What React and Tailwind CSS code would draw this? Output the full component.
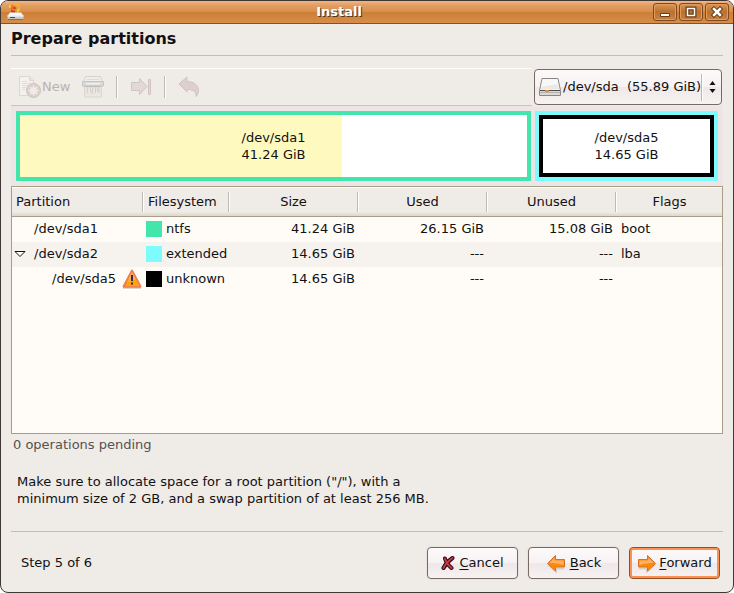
import { useState } from "react";

const partitions = [
  { name: "/dev/sda1", depth: 0, fs: "ntfs", color: "bg-[#42e5ac]", size: "41.24 GiB", used: "26.15 GiB", unused: "15.08 GiB", flags: "boot" },
  { name: "/dev/sda2", depth: 0, fs: "extended", color: "bg-[#7dfcfe]", size: "14.65 GiB", used: "---", unused: "---", flags: "lba", children: true },
  { name: "/dev/sda5", depth: 1, fs: "unknown", color: "bg-black", size: "14.65 GiB", used: "---", unused: "---", flags: "", warning: true },
];

const columns = ["Partition", "Filesystem", "Size", "Used", "Unused", "Flags"];

/* ---------- icons ---------- */

function InstallerIcon() {
  return (
    <svg width="18" height="18" viewBox="0 0 18 18" aria-hidden="true">
      <path d="M5 6.500a3.500 3.500 0 0 1 1-4" fill="none" stroke="#f0661c" strokeWidth="2" />
      <path d="M7 1.500a3.500 3.500 0 0 1 5 3" fill="none" stroke="#f9b51b" strokeWidth="2" />
      <path d="M12 5.500a3.500 3.500 0 0 1-2 3" fill="none" stroke="#f7d51c" strokeWidth="2" />
      <path d="M4 8l4 1" stroke="#d9301c" strokeWidth="2" />
      <circle cx="3" cy="3.500" r="1.200" fill="#f9d22b" />
      <circle cx="7.500" cy="5" r="1.500" fill="#e2401d" />
      <path d="M3 9.500h11l2.500 3.500H0.500z" fill="#f8f8f8" />
      <path d="M0.500 12.500h16V16h-16z" fill="#c8c8c8" />
      <path d="M0.500 12.500h16v1h-16z" fill="#ffffff" />
      <path d="M3 14h5v1H3z" fill="#44502f" />
      <path d="M1 16h15v1H1z" fill="#74706b" />
    </svg>
  );
}

function NewIcon() {
  return (
    <svg width="24" height="24" viewBox="0 0 24 24" aria-hidden="true">
      <path d="M1.500 1.500h10l4 4v15h-14z" fill="#f3f0ed" stroke="#ddd6d2" />
      <path d="M11.500 1.500v4h4" fill="#e6e1dd" stroke="#ddd6d2" />
      <path d="M4 6.500h5M4 8.500h8M4 10.500h7M4 12.500h4M4 14.500h3" stroke="#e2ddd9" />
      <circle cx="15.500" cy="15.500" r="7" fill="#dccfca" stroke="#d0c3be" />
      <path d="M15.500 9.500l1.300 3.200 3-1.500-1.400 3 3.100 1.300-3.100 1.300 1.400 3-3-1.400-1.300 3.100-1.300-3.100-3 1.400 1.400-3-3.100-1.300 3.100-1.300-1.400-3 3 1.500z" fill="#f1ebe7" />
    </svg>
  );
}

function DeleteIcon() {
  return (
    <svg width="22" height="22" viewBox="0 0 22 22" aria-hidden="true">
      <path d="M2.500 9.500h17v11.500h-17z" fill="#ebe6e2" stroke="#dcd6d2" />
      <path d="M6 10l-1 7M8.500 10v6M11 10l-1 8M13.500 10v7M15 10l1 6M17 10v7" stroke="#d3ceca" />
      <path d="M3.500 0.500h15l2 5h-19z" fill="#efecea" stroke="#d6d2cf" />
      <path d="M4.500 3.500h13" stroke="#dedad7" />
      <path d="M0.500 5.500h21v4.500h-21z" fill="#d9d8d7" stroke="#c8c6c5" />
      <path d="M4 7h14v1.500H4z" fill="#f2f0ef" />
      <path d="M3 10.500h16" stroke="#bfbcba" />
    </svg>
  );
}

function ResizeIcon() {
  return (
    <svg width="22" height="20" viewBox="0 0 22 20" aria-hidden="true">
      <path d="M1.500 5.500h8v-4l7.500 8-7.500 8v-4h-8z" fill="#e3d9d4" stroke="#d0c5c0" />
      <path d="M18.500 2.500h2v15h-2z" fill="#e0d6d1" stroke="#d0c5c0" />
    </svg>
  );
}

function UndoIcon() {
  return (
    <svg width="22" height="22" viewBox="0 0 22 22" aria-hidden="true">
      <path d="M1 8l8-7v4.500c7 0 11.500 4 11.500 9 0 2.500-1 4.500-2.500 6 .5-5-2.500-7-9-7v2.500z" fill="#ddd0cb" stroke="#d0c3be" />
    </svg>
  );
}

function DriveIcon() {
  return (
    <svg width="24" height="20" viewBox="0 0 24 20" aria-hidden="true">
      <path d="M4 1.500h16l2.500 12v4.500h-21v-4.500z" fill="#fafafa" stroke="#8a8683" strokeLinejoin="round" />
      <path d="M5 2.500h14l2 10H3z" fill="#e9e9e8" />
      <path d="M5 2.500h14l1 5C14 7 9 9 3.500 10z" fill="#f8f8f7" />
      <path d="M2 13.500h20" stroke="#4d4a47" />
      <path d="M2 14h20v4H2z" fill="#dad9d7" />
      <path d="M2 15.500h20" stroke="#b4b2af" />
      <path d="M7 13h4v2H7z" fill="#f08a24" />
      <path d="M1.500 18.500h21" stroke="#8a8783" />
    </svg>
  );
}

function WarningIcon() {
  return (
    <svg width="20" height="20" viewBox="0 0 20 20" className="mr-0.5 shrink-0" role="img" aria-label="warning">
      <path d="M1 18.500h18" stroke="#b9b2a8" strokeWidth="2" />
      <path d="M10 1.500l8.500 16h-17z" fill="#fb8a08" stroke="#ee8150" strokeWidth="2" strokeLinejoin="round" />
      <path d="M10 3l4 7.500c-3 1-6 2-9 3z" fill="#fcae62" />
      <path d="M5 13.500l9-3 3.500 6.500h-14z" fill="#ffa30d" />
      <path d="M9 6h2v6H9zM9 13.500h2v2H9z" fill="#2f3136" />
    </svg>
  );
}

function CancelIcon() {
  return (
    <svg width="14" height="16" viewBox="0 0 14 16" aria-hidden="true">
      <path d="M4 3.500c1 4 3 6.500 6.500 9.500M11.500 3C8 5.500 4.500 9 2.500 13" fill="none" stroke="#2e0b0f" strokeWidth="4" strokeLinecap="round" />
      <path d="M4 3.500c1 4 3 6.500 6.500 9.500M11.500 3C8 5.500 4.500 9 2.500 13" fill="none" stroke="#c0394a" strokeWidth="2" strokeLinecap="round" />
    </svg>
  );
}

function ArrowIcon({ flip }) {
  return (
    <svg width="20" height="20" viewBox="0 0 20 20" className={flip ? "-scale-x-100" : ""} aria-hidden="true">
      <path d="M2 15.500h8v3l8-7" fill="none" stroke="#d8cfc8" strokeWidth="2" />
      <path d="M1.500 6.500h9v-4l8 8-8 7.500v-4h-9z" fill="#fd8a07" stroke="#d8702a" strokeLinejoin="round" />
      <path d="M2.500 7.500h9V5l5 5c-5 0-9 .5-14 2z" fill="#fdb26a" />
    </svg>
  );
}

/* ---------- pieces ---------- */

function TitleButton({ label, children }) {
  return (
    <button
      aria-label={label}
      className="flex h-[18px] w-6 items-center justify-center rounded-[3px] border border-[#82491c] bg-linear-to-b from-[#dd9654] via-[#b9712f] to-[#c98343] shadow-[inset_0_0_0_1px_#dc9c62]"
    >
      <svg width="12" height="12" viewBox="0 0 12 12" aria-hidden="true">{children}</svg>
    </button>
  );
}

function ToolSeparator() {
  return <div className="ml-3 h-[22px] w-0.5 border-l border-r border-l-[#bdb9b5] border-r-white" />;
}

function DialogButton({ icon, label, primary }) {
  return (
    <button
      className={
        "flex h-8 w-[91px] items-center justify-center rounded-sm border bg-[linear-gradient(#fdfafa_0%,#f6f2f3_50%,#efe7e8_51%,#f7f2f3_100%)] " +
        (primary ? "gap-0.5 border-[#964d22] shadow-[inset_0_0_0_2px_#fb9152]" : "gap-1 border-[#766a63] shadow-[0_0_0_1px_#e8e3de]")
      }
    >
      {icon}
      <span>
        <span className="underline underline-offset-2">{label[0]}</span>
        {label.slice(1)}
      </span>
    </button>
  );
}

function DiskBar() {
  return (
    <div className="grid gap-1 bg-[#ede5e5] p-[5px]" style={{ gridTemplateColumns: `${41.24}fr ${14.65}fr` }}>
      <div className="relative flex h-[70px] items-center justify-center border-4 border-[#42e5ac] bg-white">
        <div className="absolute inset-y-0 left-0 bg-[#fefabf]" style={{ width: `${(26.15 / 41.24) * 100}%` }} />
        <p className="relative text-center leading-[17px]">/dev/sda1<br />41.24 GiB</p>
      </div>
      <div className="flex h-[70px] border-4 border-[#7dfcfe]">
        <div className="flex flex-1 items-center justify-center border-4 border-black bg-white">
          <p className="text-center leading-[17px]">/dev/sda5<br />14.65 GiB</p>
        </div>
      </div>
    </div>
  );
}

function PartitionTable() {
  return (
    <div className="flex-1 border border-[#a89d85] bg-[#fffcf7]">
      <table className="w-full table-fixed border-collapse">
        <colgroup>
          <col className="w-[132px]" />
          <col className="w-[86px]" />
          <col className="w-[129px]" />
          <col className="w-[129px]" />
          <col className="w-[129px]" />
          <col />
        </colgroup>
        <thead>
          <tr>
            {columns.map((col, i) => (
              <th key={col} className="border-b border-[#a89d85] bg-[linear-gradient(#ffffff_1px,#efebe6_1px,#efebe6_25px,#dfdad4_28px)] p-0 font-normal">
                <div className="flex h-[29px] items-center">
                  <span className={i < 2 ? "flex-1 pl-1 text-left" : "flex-1 text-center"}>{col}</span>
                  {i < columns.length - 1 && <div className="h-5 w-0.5 border-l border-r border-l-[#bdb9b5] border-r-white" />}
                </div>
              </th>
            ))}
          </tr>
        </thead>
        <tbody>
          {partitions.map((p) => (
            <tr key={p.name} className="h-[25px] even:bg-[#f6f3ef]">
              <td className="p-0">
                <div className={p.depth ? "flex items-center pl-10" : "flex items-center pl-0.5"}>
                  {!p.depth && (
                    <span className="flex w-5">
                      {p.children && (
                        <svg width="12" height="8" viewBox="0 0 12 8" aria-hidden="true">
                          <path d="M1 1.500h10L6 6.500z" fill="#fff" stroke="#111" />
                        </svg>
                      )}
                    </span>
                  )}
                  <span className="flex-1">{p.name}</span>
                  {p.warning && <WarningIcon />}
                </div>
              </td>
              <td className="p-0">
                <div className="flex items-center gap-1 pl-0.5">
                  <span className={"size-4 " + p.color} />
                  {p.fs}
                </div>
              </td>
              <td className="p-0 pr-1 text-right">{p.size}</td>
              <td className="p-0 pr-1 text-right">{p.used}</td>
              <td className="p-0 pr-1 text-right">{p.unused}</td>
              <td className="p-0 pl-1">{p.flags}</td>
            </tr>
          ))}
        </tbody>
      </table>
    </div>
  );
}

export default function App() {
  const [device, setDevice] = useState("sda");

  return (
    <div className="min-h-screen bg-white font-['DejaVu_Sans',sans-serif] text-[13px] leading-4 text-[#111]">
      <div className="flex min-h-screen flex-col overflow-hidden rounded-lg border border-[#3f3734] bg-[#efebe7]">
        {/* title bar */}
        <header className="flex h-[23px] items-center border-b border-[#8b4f22] bg-[linear-gradient(#f4b486_0%,#e2a064_18%,#d98e4c_48%,#cc7f36_52%,#d78d49_100%)] px-1">
          <div className="pl-0.5"><InstallerIcon /></div>
          <h1 className="flex-1 text-center font-bold text-white [text-shadow:1px_1px_0_#4a3828]">Install</h1>
          <div className="flex gap-0.5">
            <TitleButton label="Minimize">
              <path d="M1.500 7.500h9v3h-9z" fill="#fff" stroke="#6a3b15" />
            </TitleButton>
            <TitleButton label="Maximize">
              <path d="M2.500 2.500h7v7h-7z" fill="none" stroke="#6a3b15" strokeWidth="4" />
              <path d="M2.500 2.500h7v7h-7z" fill="none" stroke="#fff" strokeWidth="1.500" />
            </TitleButton>
            <TitleButton label="Close">
              <path d="M3 3l6 6M9 3l-6 6" stroke="#6a3b15" strokeWidth="4.500" strokeLinecap="square" />
              <path d="M3 3l6 6M9 3l-6 6" stroke="#fff" strokeWidth="2.500" strokeLinecap="square" />
            </TitleButton>
          </div>
        </header>

        <main className="flex flex-1 flex-col px-2.5 pb-[13px]">
          <h2 className="border-b border-[#c0bcb8] pt-[5px] pb-1.5 text-base leading-5 font-bold text-[#111]">Prepare partitions</h2>

          {/* toolbar + device chooser */}
          <div className="mt-3 flex items-stretch gap-0.5 pr-px">
            <div className="flex flex-1 items-center border-t border-b border-t-white border-b-[#cfc4ba] pl-[7px] text-[#b9b3ae] [text-shadow:1px_1px_0_#fff]">
              <button disabled className="flex items-center"><NewIcon />New</button>
              <button disabled aria-label="Delete" className="ml-3"><DeleteIcon /></button>
              <ToolSeparator />
              <button disabled aria-label="Resize/Move" className="ml-3"><ResizeIcon /></button>
              <ToolSeparator />
              <button disabled aria-label="Undo" className="ml-3"><UndoIcon /></button>
            </div>
            <div className="relative my-px">
              <select
                aria-label="Device"
                value={device}
                onChange={(e) => setDevice(e.target.value)}
                className="h-9 w-[188px] appearance-none rounded-sm border border-[#766a63] bg-[linear-gradient(#fdf9f9_0%,#f6f2f3_50%,#efe8e8_51%,#f7f2f3_100%)] pl-7 text-[#111]"
              >
                <option value="sda">/dev/sda{"\u00a0\u00a0"}(55.89 GiB)</option>
              </select>
              <div className="pointer-events-none absolute inset-y-0 left-1 flex items-center"><DriveIcon /></div>
              <div className="pointer-events-none absolute inset-y-0 right-1.5 flex items-center gap-1.5">
                <div className="h-[27px] w-0.5 border-l border-r border-l-[#bdb6b3] border-r-white" />
                <svg width="7" height="14" viewBox="0 0 7 14" aria-hidden="true">
                  <path d="M3.500 1L6.500 5h-6zM3.500 13L6.500 9h-6z" fill="#111" />
                </svg>
              </div>
            </div>
          </div>

          <DiskBar />
          <PartitionTable />

          <p className="mt-[3px] px-0.5 text-[#555250]">0 operations pending</p>

          <p className="mt-5 px-1.5 leading-[17px]">
            Make sure to allocate space for a root partition ("/"), with a
            <br />
            minimum size of 2 GB, and a swap partition of at least 256 MB.
          </p>

          {/* footer */}
          <footer className="mt-6 flex items-center gap-2.5 border-t border-[#c0bcb8] pt-[15px] pr-[3px] pl-2.5">
            <span className="flex-1">Step 5 of 6</span>
            <DialogButton icon={<CancelIcon />} label="Cancel" />
            <DialogButton icon={<ArrowIcon flip />} label="Back" />
            <DialogButton icon={<ArrowIcon />} label="Forward" primary />
          </footer>
        </main>
      </div>
    </div>
  );
}
